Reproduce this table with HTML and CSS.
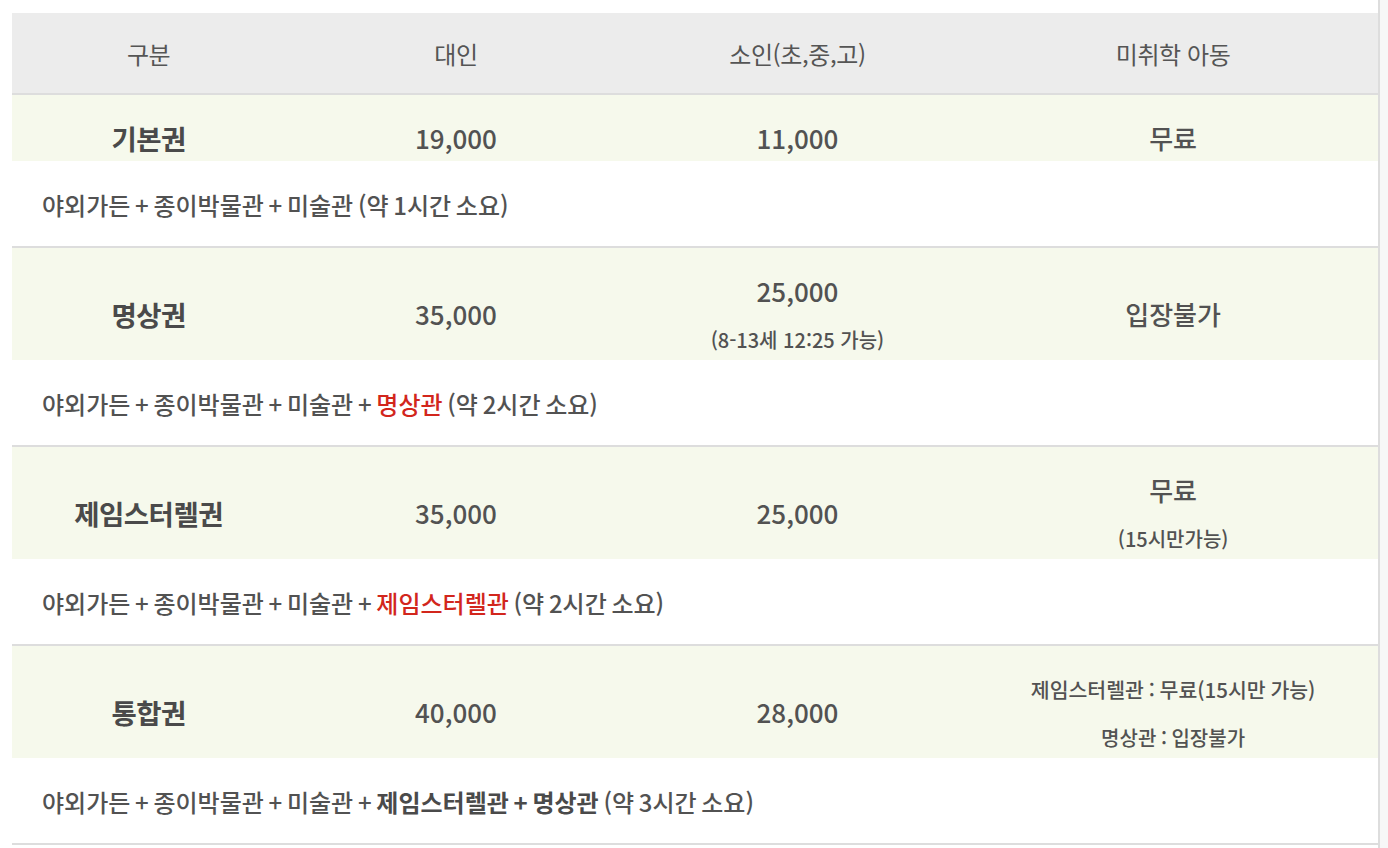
FILE: index.html
```html
<!DOCTYPE html>
<html lang="ko">
<head>
<meta charset="utf-8">
<title>요금 안내</title>
<link rel="stylesheet" href="styles.css">
</head>
<body>
<div class="page">
  <table class="fee">
    <colgroup>
      <col class="c1"><col class="c2"><col class="c3"><col class="c4">
    </colgroup>
    <thead>
      <tr>
        <th>구분</th>
        <th>대인</th>
        <th>소인(초,중,고)</th>
        <th>미취학 아동</th>
      </tr>
    </thead>
    <tbody>
      <tr class="main">
        <td class="name">기본권</td>
        <td class="price">19,000</td>
        <td class="price">11,000</td>
        <td class="price">무료</td>
      </tr>
      <tr class="desc">
        <td colspan="4">야외가든 + 종이박물관 + 미술관 (약 1시간 소요)</td>
      </tr>
      <tr class="main">
        <td class="name">명상권</td>
        <td class="price">35,000</td>
        <td class="price">25,000<span class="sub">(8-13세 12:25 가능)</span></td>
        <td class="price">입장불가</td>
      </tr>
      <tr class="desc">
        <td colspan="4">야외가든 + 종이박물관 + 미술관 + <span class="red">명상관</span> (약 2시간 소요)</td>
      </tr>
      <tr class="main">
        <td class="name">제임스터렐권</td>
        <td class="price">35,000</td>
        <td class="price">25,000</td>
        <td class="price">무료<span class="sub">(15시만가능)</span></td>
      </tr>
      <tr class="desc">
        <td colspan="4">야외가든 + 종이박물관 + 미술관 + <span class="red">제임스터렐관</span> (약 2시간 소요)</td>
      </tr>
      <tr class="main">
        <td class="name">통합권</td>
        <td class="price">40,000</td>
        <td class="price">28,000</td>
        <td class="small"><span class="line">제임스터렐관 : 무료(15시만 가능)</span><span class="sub">명상관 : 입장불가</span></td>
      </tr>
      <tr class="desc">
        <td colspan="4">야외가든 + 종이박물관 + 미술관 + <b>제임스터렐관 + 명상관</b> (약 3시간 소요)</td>
      </tr>
    </tbody>
  </table>
</div>
<div class="scrollbar"></div>
</body>
</html>
```
FILE: styles.css
```css
html, body {
  margin: 0;
  padding: 0;
  background: #fff;
}
body {
  font-family: "Noto Sans CJK KR", "Noto Sans", sans-serif;
  color: #525252;
}
.page {
  padding: 13px 10px 0 12px;
}
.fee {
  width: 100%;
  border-collapse: collapse;
  table-layout: fixed;
}
.c1 { width: 20%; }
.c2 { width: 25%; }
.c3 { width: 25%; }
.c4 { width: 30%; }

.fee th {
  height: 80px;
  padding: 0;
  background: #ececec;
  border-bottom: 2px solid #dddddd;
  font-weight: 400;
  font-size: 24px;
  color: #555;
  text-align: center;
  vertical-align: middle;
  letter-spacing: -0.4px;
}
.main td {
  background: #f6f9ec;
  padding: 29px 0 9px;
  text-align: center;
  vertical-align: middle;
  line-height: 28px;
}
.main .name {
  font-size: 27.5px;
  font-weight: 700;
  color: #4a4a4a;
  letter-spacing: -0.5px;
}
.main .price {
  font-size: 26px;
  font-weight: 500;
}
.main .small {
  font-size: 20.5px;
  font-weight: 500;
  word-spacing: -1px;
}
.sub {
  display: block;
  margin-top: 23px;
  line-height: 23px;
  font-size: 20px;
  font-weight: 500;
}
.line {
  display: block;
}
.desc td {
  padding: 29px 30px 26px;
  line-height: 30px;
  font-size: 24px;
  font-weight: 500;
  letter-spacing: 0;
  word-spacing: -2px;
  border-bottom: 2px solid #dddddd;
  text-align: left;
}
.desc b {
  font-weight: 700;
  color: #4a4a4a;
}
.red {
  color: #d2261c;
}
.scrollbar {
  position: fixed;
  top: 0;
  right: 0;
  bottom: 0;
  width: 8px;
  background: #f7f7f7;
  border-left: 2px solid #dddddd;
}
```
